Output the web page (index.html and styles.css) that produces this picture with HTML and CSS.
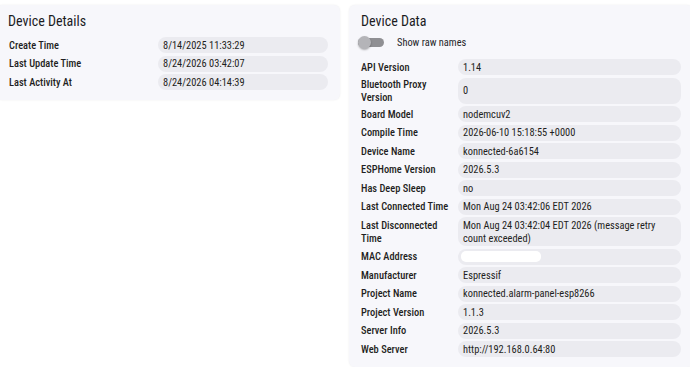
FILE: index.html
```html
<!DOCTYPE html>
<html>
<head>
<meta charset="utf-8">
<link rel="stylesheet" href="styles.css">
</head>
<body>
<div class="page">
  <section class="card">
    <h2 class="title">Device Details</h2>
    <div class="grid grid-details">
      <div class="label">Create Time</div><div class="value">8/14/2025 11:33:29</div>
      <div class="label">Last Update Time</div><div class="value">8/24/2026 03:42:07</div>
      <div class="label">Last Activity At</div><div class="value">8/24/2026 04:14:39</div>
    </div>
  </section>
  <section class="card">
    <h2 class="title">Device Data</h2>
    <div class="toggle-row">
      <span class="switch"><span class="thumb"></span></span>
      <span class="toggle-label">Show raw names</span>
    </div>
    <div class="grid grid-data">
      <div class="label">API Version</div><div class="value">1.14</div>
      <div class="label">Bluetooth Proxy Version</div><div class="value">0</div>
      <div class="label">Board Model</div><div class="value">nodemcuv2</div>
      <div class="label">Compile Time</div><div class="value">2026-06-10 15:18:55 +0000</div>
      <div class="label">Device Name</div><div class="value">konnected-6a6154</div>
      <div class="label">ESPHome Version</div><div class="value">2026.5.3</div>
      <div class="label">Has Deep Sleep</div><div class="value">no</div>
      <div class="label">Last Connected Time</div><div class="value">Mon Aug 24 03:42:06 EDT 2026</div>
      <div class="label">Last Disconnected Time</div><div class="value">Mon Aug 24 03:42:04 EDT 2026 (message retry count exceeded)</div>
      <div class="label">MAC Address</div><div class="value"><span class="redacted"></span></div>
      <div class="label">Manufacturer</div><div class="value">Espressif</div>
      <div class="label">Project Name</div><div class="value">konnected.alarm-panel-esp8266</div>
      <div class="label">Project Version</div><div class="value">1.1.3</div>
      <div class="label">Server Info</div><div class="value">2026.5.3</div>
      <div class="label">Web Server</div><div class="value">http://192.168.0.64:80</div>
    </div>
  </section>
</div>
</body>
</html>
```

FILE: styles.css
```css
html, body {
  margin: 0;
  padding: 0;
  background: #ffffff;
  overflow: hidden;
}
body {
  font-family: "Roboto Condensed", Roboto, "Liberation Sans", sans-serif;
  color: #1f1f22;
}
.page {
  display: flex;
  align-items: flex-start;
  gap: 9px;
  padding-top: 5px;
  margin-left: -4px;
  width: 700px;
}
.card {
  flex: none;
  width: 344px;
  box-sizing: border-box;
  padding: 6px 12px 10px 12px;
  background: #f7f7fb;
  border-radius: 6px;
  box-shadow: 0 0 2px rgba(0, 0, 0, 0.08);
}
.title {
  margin: 0 0 6px 0;
  font-size: 14px;
  line-height: 20px;
  font-weight: 400;
  color: #1c1c1f;
}
.toggle-row {
  display: flex;
  align-items: center;
  height: 16px;
  margin: -3px 0 9px -3px;
}
.switch {
  position: relative;
  width: 26px;
  height: 9px;
  border-radius: 5px;
  background: #8f8f93;
  margin-right: 13px;
}
.thumb {
  position: absolute;
  left: 0;
  top: -2px;
  width: 13px;
  height: 13px;
  border-radius: 50%;
  background: #b4b4b8;
  box-shadow: 0 1px 2px rgba(0, 0, 0, 0.3);
}
.toggle-label {
  font-size: 10.4px;
  color: #26262a;
}
.grid {
  display: grid;
  row-gap: 2.5px;
  align-items: stretch;
}
.grid-details {
  grid-template-columns: 149px 1fr;
  margin-left: 1px;
}
.grid-data {
  grid-template-columns: 97px 1fr;
}
.label {
  font-size: 10.4px;
  line-height: 13px;
  font-weight: 500;
  color: #1f1f22;
  align-self: center;
  padding-right: 4px;
}
.value {
  font-size: 10.4px;
  line-height: 13px;
  padding: 1.5px 5px;
  min-height: 13px;
  background: #ebebf0;
  border-radius: 8px;
  color: #1f1f22;
  display: flex;
  align-items: center;
}
.redacted {
  display: block;
  width: 80px;
  height: 11px;
  margin-left: -2px;
  border-radius: 5px;
  background: #ffffff;
}
```
